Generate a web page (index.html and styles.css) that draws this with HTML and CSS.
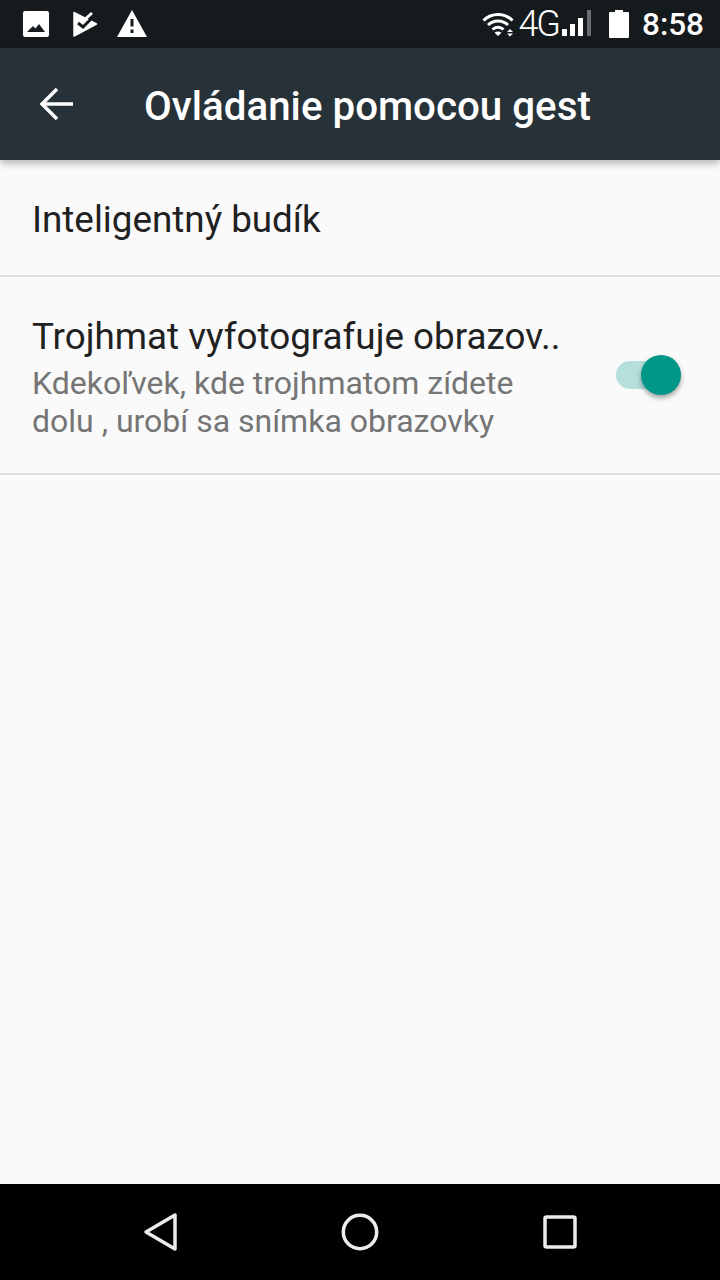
FILE: index.html
```html
<!DOCTYPE html>
<html>
<head>
    <title>Ovládanie pomocou gest</title>
    <link rel="stylesheet" href="styles.css">
</head>
<body>
    <div class="screen">
        <div class="status-bar">
            <div class="status-left">
                <svg class="icon-img" width="28" height="28" viewBox="0 0 28 28"><path fill="#fff" fill-rule="evenodd" d="M3 1h22a2 2 0 0 1 2 2v22a2 2 0 0 1-2 2H3a2 2 0 0 1-2-2V3a2 2 0 0 1 2-2zM5 22h18l-6-8-3.500 4.500L11 16z"/></svg>
                <svg class="icon-play" width="26" height="28" viewBox="0 0 26 28"><path fill="#fff" stroke="#fff" stroke-width="1.500" stroke-linejoin="round" d="M2 2.500L24.500 14 2 26z"/><path fill="none" stroke="#151a1d" stroke-width="3" d="M6 13l5 4 13-13"/><path fill="none" stroke="#fff" stroke-width="3" d="M11 11l9-8"/></svg>
                <svg class="icon-warn" width="32" height="28" viewBox="0 0 32 28"><path fill="#fff" fill-rule="evenodd" d="M16 0l15 27H1zM14.500 9v7.500h3V9zM14.500 19.500V23h3v-3.500z"/></svg>
            </div>
            <div class="status-right">
                <svg class="icon-wifi" width="32" height="26" viewBox="0 0 32 26"><g fill="none" stroke="#fff" stroke-width="3"><path d="M1.500 9.500c8-8 21-8 29 0"/><path d="M6 14c5.500-5.500 14.500-5.500 20 0"/><path d="M10.500 18.500c3-3 8-3 11 0"/></g><path fill="#fff" d="M16 25l-3.500-3.500c2-1.500 5-1.500 7 0zM28 18l3 3h-6zM25 22.500h6l-3 3z"/></svg>
                <span class="net">4G</span>
                <svg class="icon-signal" width="30" height="28" viewBox="0 0 30 28"><path fill="#fff" d="M1 19h5v7H1zM9 14h5v12H9zM17 8h5v18h-5z"/><path fill="#6b6e70" d="M26 0h4v26h-4z"/></svg>
                <svg class="icon-batt" width="20" height="28" viewBox="0 0 20 28"><path fill="#fff" d="M6 0h8v2h5a1 1 0 0 1 1 1v24a1 1 0 0 1-1 1H1a1 1 0 0 1-1-1V3a1 1 0 0 1 1-1h5z"/></svg>
                <span class="clock">8:58</span>
            </div>
        </div>

        <div class="app-bar">
            <svg class="back" width="36" height="34" viewBox="0 0 36 34"><path fill="none" stroke="#fff" stroke-width="3.500" d="M34 17H4M18 2L3 17l15 15"/></svg>
            <h1 class="title">Ovládanie pomocou gest</h1>
        </div>

        <div class="content">
            <div class="row row-single">
                <div class="row-title">Inteligentný budík</div>
            </div>
            <div class="row row-switch">
                <div class="row-text">
                    <div class="row-title">Trojhmat vyfotografuje obrazov..</div>
                    <div class="row-sub">Kdekoľvek, kde trojhmatom zídete<br>dolu , urobí sa snímka obrazovky</div>
                </div>
                <div class="switch"><span class="track"></span><span class="thumb"></span></div>
            </div>
        </div>

        <div class="nav-bar">
            <svg width="40" height="40" viewBox="0 0 40 40"><path fill="none" stroke="#ececec" stroke-width="3.500" stroke-linejoin="round" d="M35 3v34L6 20z"/></svg>
            <svg width="40" height="40" viewBox="0 0 40 40"><circle cx="20" cy="20" r="16.700" fill="none" stroke="#ececec" stroke-width="3.500"/></svg>
            <svg width="40" height="40" viewBox="0 0 40 40"><rect x="5" y="5" width="30" height="30" rx="1.500" fill="none" stroke="#ececec" stroke-width="3.500"/></svg>
        </div>
    </div>
</body>
</html>
```

FILE: styles.css
```css
html, body {
    margin: 0;
    padding: 0;
}

body {
    font-family: Roboto, "Liberation Sans", sans-serif;
    background-color: #fafafa;
}

.screen {
    width: 720px;
    height: 1280px;
    display: flex;
    flex-direction: column;
    overflow: hidden;
}

.status-bar {
    height: 48px;
    flex: none;
    background-color: #151a1d;
    color: #fff;
    display: flex;
    align-items: center;
    justify-content: space-between;
    padding: 0 16px 0 22px;
}

.status-left,
.status-right {
    display: flex;
    align-items: center;
}

.icon-img { margin-right: 22px; }
.icon-play { margin-right: 18px; }

.net {
    font-size: 36px;
    letter-spacing: -2px;
    margin: 0 2px 0 4px;
    font-weight: 300;
}

.icon-wifi { margin-left: -8px; }
.icon-batt { margin: 0 13px 0 18px; }

.clock {
    font-size: 31.5px;
    font-weight: 500;
}

.app-bar {
    height: 112px;
    flex: none;
    background-color: #263238;
    display: flex;
    align-items: center;
    padding-left: 39px;
    box-shadow: 0 3px 8px rgba(0, 0, 0, 0.3);
    position: relative;
}

.back { margin-right: 69px; }

.title {
    margin: 4px 0 0;
    color: #fff;
    font-size: 40.3px;
    font-weight: 500;
}

.content {
    flex: 1;
}

.row {
    border-bottom: 2px solid #dfdfdf;
    box-sizing: border-box;
    padding-left: 32px;
}

.row-single {
    height: 117px;
    display: flex;
    align-items: center;
    padding-top: 4px;
}

.row-switch {
    height: 198px;
    display: flex;
    align-items: center;
    justify-content: space-between;
    padding-right: 39px;
}

.row-text {
    margin-top: 4px;
}

.row-title {
    font-size: 36.8px;
    color: #212121;
}

.row-sub {
    font-size: 32px;
    line-height: 38px;
    color: #757575;
    margin-top: 6px;
}

.switch {
    position: relative;
    width: 66px;
    height: 40px;
}

.track {
    position: absolute;
    left: 1px;
    top: 6px;
    width: 59px;
    height: 28px;
    border-radius: 14px;
    background-color: #b5dfdb;
}

.thumb {
    position: absolute;
    right: 0;
    top: 0;
    width: 40px;
    height: 40px;
    border-radius: 50%;
    background-color: #009688;
    box-shadow: 0 3px 5px rgba(0, 0, 0, 0.35);
}

.nav-bar {
    height: 96px;
    flex: none;
    background-color: #000;
    display: flex;
    align-items: center;
    justify-content: space-between;
    padding: 0 140px;
}
```
